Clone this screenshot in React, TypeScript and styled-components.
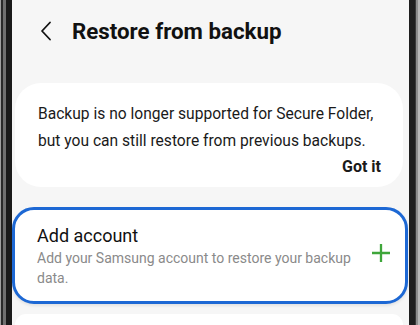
import React from "react";
import styled, { createGlobalStyle } from "styled-components";

const Global = createGlobalStyle`
  html, body { margin: 0; padding: 0; }
  body { width: 420px; height: 325px; overflow: hidden; font-family: Roboto, "Noto Sans", sans-serif; }
`;

const Device = styled.div`
  display: flex;
  width: 420px;
  height: 325px;
  overflow: hidden;
`;

const Bezel = styled.div<{ $side: "left" | "right" }>`
  flex: none;
  width: ${(p) => (p.$side === "left" ? 12 : 11)}px;
  height: 100%;
  background: ${(p) =>
    p.$side === "left"
      ? "linear-gradient(90deg, #a0a0a0 0 1px, #2a2a2a 1px 3px, #707070 3px 6px, #1a1a1a 6px 100%)"
      : "linear-gradient(90deg, #1e1e1e 0 6px, #3a3a3a 6px 7px, #8c8c8c 7px 9px, #b8b8b8 9px 100%)"};
`;

const Screen = styled.div`
  flex: 1;
  background: #f6f6f6;
  display: flex;
  flex-direction: column;
`;

const Header = styled.div`
  display: flex;
  align-items: center;
  height: 62px;
  padding: 0 0 0 28px;
  gap: 20px;
  margin-bottom: 21px;
`;

const BackBtn = styled.div`
  width: 12px;
  height: 20px;
  display: flex;
  align-items: center;
  justify-content: center;
`;

const Title = styled.h1`
  margin: 0;
  font-size: 22.3px;
  font-weight: 700;
  color: #111;
`;

const Card = styled.div<{ $selected?: boolean }>`
  background: #fff;
  border-radius: ${(p) => (p.$selected ? 22 : 26)}px;
  border: ${(p) => (p.$selected ? "3px solid #1d68d4" : "none")};
  box-shadow: ${(p) => (p.$selected ? "0 2px 3px rgba(0,0,0,0.08)" : "none")};
  margin: ${(p) => (p.$selected ? "0 1px 10px 0" : "0 6px 20px 3px")};
`;

const Notice = styled(Card)`
  padding: 18px 22px 9px 23px;
`;

const NoticeText = styled.p`
  margin: 0;
  font-size: 15.6px;
  line-height: 27px;
  color: #1a1a1a;
`;

const NoticeActions = styled.div`
  display: flex;
  justify-content: flex-end;
  margin-top: 1px;
`;

const TextButton = styled.span`
  font-size: 16px;
  line-height: 22px;
  font-weight: 700;
  color: #1a1a1a;
`;

const AccountRow = styled(Card)`
  display: flex;
  align-items: center;
  padding: 14px 15px 13px 22px;
  gap: 6px;
`;

const RowText = styled.div`
  flex: 1;
  display: flex;
  flex-direction: column;
`;

const RowTitle = styled.div`
  font-size: 18px;
  color: #111;
  line-height: 24px;
`;

const RowSub = styled.div`
  font-size: 14px;
  color: #8a8a8a;
  line-height: 20px;
`;

const PlusIcon = styled.svg`
  flex: none;
  margin-bottom: 6px;
`;

const NextCard = styled.div`
  background: #fff;
  border-radius: 26px 26px 0 0;
  flex: 1;
  margin: 0 6px 0 3px;
`;

export default function App() {
  return (
    <>
      <Global />
      <Device>
        <Bezel $side="left" />
        <Screen>
          <Header>
            <BackBtn>
              <svg width="12" height="20" viewBox="0 0 12 20" fill="none">
                <path d="M10 1.5 L2 10 L10 18.5" stroke="#111" strokeWidth="1.8" strokeLinecap="round" strokeLinejoin="round" />
              </svg>
            </BackBtn>
            <Title>Restore from backup</Title>
          </Header>
          <Notice>
            <NoticeText>
              Backup is no longer supported for Secure Folder, but you can still restore from previous backups.
            </NoticeText>
            <NoticeActions>
              <TextButton>Got it</TextButton>
            </NoticeActions>
          </Notice>
          <AccountRow $selected>
            <RowText>
              <RowTitle>Add account</RowTitle>
              <RowSub>Add your Samsung account to restore your backup data.</RowSub>
            </RowText>
            <PlusIcon width="18" height="18" viewBox="0 0 18 18">
              <path d="M9 0 V18 M0 9 H18" stroke="#3ea63a" strokeWidth="2.3" />
            </PlusIcon>
          </AccountRow>
          <NextCard />
        </Screen>
        <Bezel $side="right" />
      </Device>
    </>
  );
}
